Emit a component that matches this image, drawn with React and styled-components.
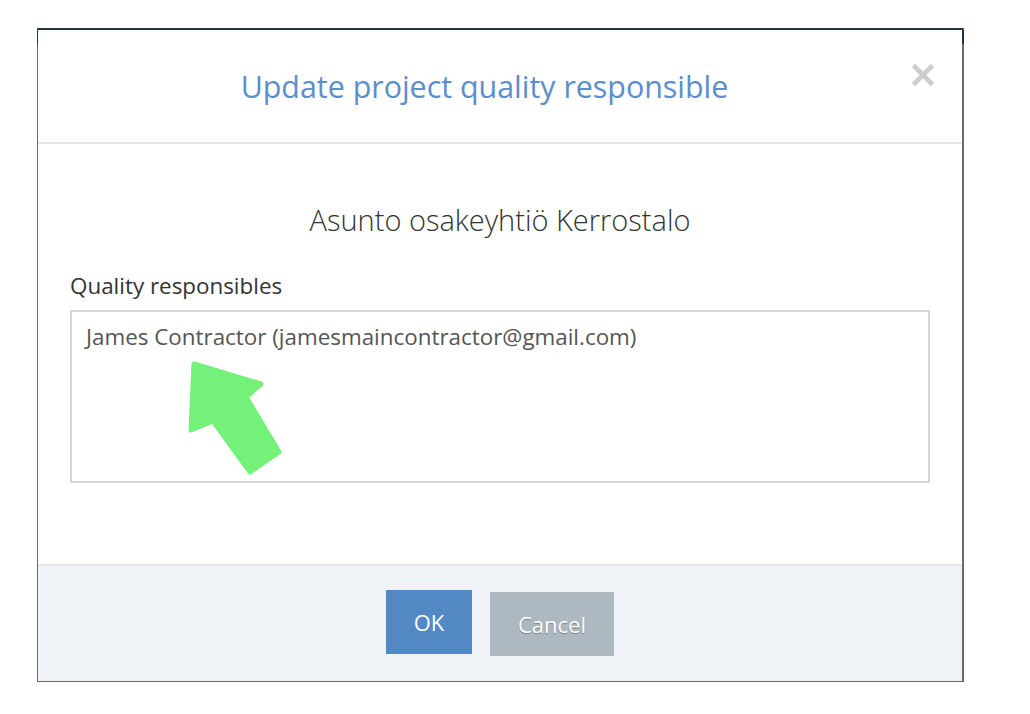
import React from "react";
import styled, { createGlobalStyle } from "styled-components";

const Global = createGlobalStyle`
  html, body {
    margin: 0;
    padding: 0;
    background: #ffffff;
  }
  body {
    font-family: "Open Sans", "Noto Sans", "Liberation Sans", sans-serif;
    -webkit-font-smoothing: antialiased;
  }
`;

const Page = styled.div`
  padding: 28px 0 0 37px;
`;

const Modal = styled.div`
  position: relative;
  width: 924px;
  height: 651px;
  display: flex;
  flex-direction: column;
  background: #ffffff;
  border-top: 2px solid #22384a;
  border-left: 1px solid #6a6a6a;
  border-right: 2px solid #6a6a6a;
  border-bottom: 1px solid #6a6a6a;

  /* darker top ends of the side frame */
  &::before,
  &::after {
    content: "";
    position: absolute;
    top: 0;
    height: 14px;
    background: #22384a;
  }
  &::before {
    left: -1px;
    width: 1px;
  }
  &::after {
    right: -2px;
    width: 2px;
  }
`;

const Header = styled.div`
  height: 112px;
  display: flex;
  align-items: center;
  padding: 0 27px 0 20px;
  border-bottom: 2px solid #e6e6e6;
`;

const Title = styled.h2`
  flex: 1;
  margin: 0;
  text-align: center;
  font-size: 30.4px;
  font-weight: 400;
  color: #5b8ecb;
  line-height: 1;
  padding-top: 2px;
`;

const CloseButton = styled.button`
  align-self: flex-start;
  margin-top: 33px;
  width: 24px;
  height: 24px;
  padding: 0;
  border: none;
  background: none;
  cursor: pointer;
  display: block;
  svg {
    display: block;
  }
`;

const Body = styled.div`
  flex: 1;
  padding: 58px 32px 0 32px;
  display: flex;
  flex-direction: column;
`;

const Company = styled.div`
  text-align: center;
  font-size: 29px;
  font-weight: 300;
  color: #333333;
  line-height: 36px;
`;

const Label = styled.label`
  margin-top: 35px;
  font-size: 22.4px;
  font-weight: 400;
  color: #333333;
  line-height: 26px;
`;

const SelectBox = styled.div`
  position: relative;
  box-sizing: border-box;
  margin-top: 11px;
  height: 173px;
  border: 2px solid #d6d6d6;
  padding: 11px 14px;
  font-size: 22.4px;
  color: #555555;
  line-height: 28px;
`;

const Pointer = styled.svg`
  position: absolute;
  left: 0;
  top: 0;
  pointer-events: none;
`;

const Footer = styled.div`
  height: 112px;
  padding-bottom: 3px;
  background: #eff2f7;
  border-top: 2px solid #e3e6eb;
  display: flex;
  align-items: center;
  justify-content: center;
  gap: 18px;
`;

const Button = styled.button`
  height: 64px;
  width: ${(p) => p.$w}px;
  margin-top: ${(p) => p.$shift || 0}px;
  border: none;
  padding: 0;
  font-family: inherit;
  font-size: 22px;
  font-weight: 500;
  color: #ffffff;
  background: ${(p) => p.$bg};
  text-shadow: ${(p) => (p.$shadow ? "0 1px 1px rgba(50,60,70,0.45)" : "none")};
  cursor: pointer;
`;

export default function App() {
  return (
    <>
      <Global />
      <Page>
        <Modal>
          <Header>
            <Title>Update project quality responsible</Title>
            <CloseButton aria-label="Close">
              <svg width="24" height="24" viewBox="0 0 24 24">
                <path
                  d="M2.5 2.5 L21.5 21.5 M21.5 2.5 L2.5 21.5"
                  stroke="#cdcdcd"
                  strokeWidth="4.6"
                  fill="none"
                />
              </svg>
            </CloseButton>
          </Header>
          <Body>
            <Company>Asunto osakeyhtiö Kerrostalo</Company>
            <Label>Quality responsibles</Label>
            <SelectBox>
              James Contractor (jamesmaincontractor@gmail.com)
              <Pointer width="240" height="170" viewBox="0 0 240 170">
                <polygon
                  points="122,52 189,72 174,85 207,140 178,160 141,109 119,118"
                  fill="#74f178"
                  stroke="#74f178"
                  strokeWidth="5"
                  strokeLinejoin="round"
                />
              </Pointer>
            </SelectBox>
          </Body>
          <Footer>
            <Button $w={86} $bg="#5288c4">OK</Button>
            <Button $w={124} $bg="#adb8c0" $shift={4} $shadow>
              Cancel
            </Button>
          </Footer>
        </Modal>
      </Page>
    </>
  );
}
